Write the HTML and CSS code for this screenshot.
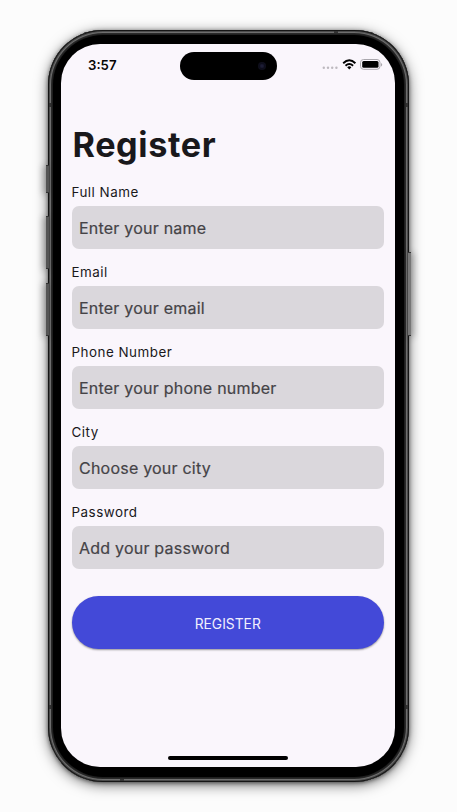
FILE: index.html
```html
<!DOCTYPE html>
<html lang="en">
<head>
<meta charset="utf-8">
<title>Register</title>
<link rel="stylesheet" href="styles.css">
</head>
<body>
<div class="phone">
  <i class="key action"></i><i class="key volume-up"></i><i class="key volume-down"></i><i class="key power"></i>
  <i class="seam top-left"></i><i class="seam top-right"></i><i class="seam side-right"></i><i class="seam bottom-left"></i><i class="seam bottom-edge"></i><i class="seam bottom-right"></i>
  <main class="screen">
    <header class="status">
      <time class="clock">3:57</time>
      <div class="island"><i class="lens"></i></div>
      <svg class="indicators" width="60" height="14" viewBox="0 0 60 14">
        <g fill="#bdb9bf"><circle cx="1.8" cy="9.8" r="1.2"/><circle cx="6" cy="9.8" r="1.2"/><circle cx="10.2" cy="9.8" r="1.2"/><circle cx="14.4" cy="9.8" r="1.2"/></g>
        <g fill="none" stroke="#000" stroke-width="1.9"><path d="M21.2 5.2Q27.3-.6 33.4 5.2"/><path d="M23.5 7.700Q27.300 4.300 31.100 7.700"/></g>
        <path d="M25.200 9.200Q27.300 7.500 29.400 9.200L27.300 11.400Z"/>
        <rect x="38.500" y="1.500" width="19.500" height="9.800" rx="3" fill="none" stroke="#aaa7ad"/>
        <rect x="40.200" y="3" width="16.300" height="6.800" rx="1.500"/>
        <path d="M59 5v3.400q1.200-.5 1.200-1.700T59 5Z" fill="#aaa7ad"/>
      </svg>
    </header>
    <form class="form">
      <h1>Register</h1>
      <label class="field"><span class="label">Full Name</span><span class="box">Enter your name</span></label>
      <label class="field"><span class="label">Email</span><span class="box">Enter your email</span></label>
      <label class="field"><span class="label">Phone Number</span><span class="box">Enter your phone number</span></label>
      <label class="field"><span class="label">City</span><span class="box">Choose your city</span></label>
      <label class="field"><span class="label">Password</span><span class="box">Add your password</span></label>
      <button type="button">REGISTER</button>
    </form>
    <div class="home"></div>
  </main>
</div>
</body>
</html>
```
FILE: styles.css
```css
* { box-sizing: border-box; }
html, body { height: 100%; overflow: hidden; }
body {
  margin: 0;
  padding: 30px 0 0 48px;
  background: #fcfcfc;
  font-family: Inter, sans-serif;
  color: #19181b;
}
.phone {
  position: relative;
  width: 361px;
  height: 752px;
  padding: 14px 14px 15px 13px;
  border-radius: 55px;
  background: #000;
  box-shadow:
    inset 0 0 0 1px #161616,
    inset 0 0 0 2px #4b4b4b,
    inset 0 0 0 3px #6e6e6e,
    inset 0 0 0 4px #292929,
    inset 0 0 0 5px #1e1e1e,
    0 1px 4px rgba(0, 0, 0, .55),
    0 3px 14px rgba(0, 0, 0, .52);
}
.key {
  position: absolute;
  left: -2px;
  width: 3px;
  background: #555;
  border: solid #333;
  border-width: 1px 0;
  box-shadow: -2px 1px 7px rgba(0, 0, 0, .45);
}
.action { top: 135px; height: 28px; }
.volume-up { top: 186px; height: 53px; }
.volume-down { top: 253px; height: 53px; }
.power {
  left: auto;
  right: -2px;
  top: 222px;
  height: 84px;
  background: #777;
  box-shadow: 2px 1px 7px rgba(0, 0, 0, .45);
}
.seam { position: absolute; background: #333; width: 2px; height: 4px; }
.top-left { left: 1px; top: 73px; }
.top-right { left: 286px; top: 1px; width: 4px; height: 2px; }
.side-right { right: 1px; top: 73px; }
.bottom-left { left: 1px; bottom: 73px; }
.bottom-edge { left: 72px; bottom: 1px; width: 4px; height: 2px; }
.bottom-right { right: 1px; bottom: 73px; }
.screen {
  display: flex;
  flex-direction: column;
  width: 334px;
  height: 723px;
  border-radius: 39px;
  background: #faf6fc;
}
.status {
  display: grid;
  grid-template-columns: 119px 97px 1fr;
  height: 79px;
  padding-top: 8px;
  align-items: start;
}
.clock {
  padding: 5px 0 0 27px;
  font-size: 13.2px;
  line-height: 16px;
  font-weight: 600;
  color: #050505;
}
.island {
  display: flex;
  align-items: center;
  justify-content: flex-end;
  height: 28px;
  padding-right: 11px;
  border-radius: 14px;
  background: #000;
}
.lens {
  width: 8px;
  height: 8px;
  border-radius: 50%;
  background: radial-gradient(#1d1d35 0 20%, #0d0d1b 45%, #11111d);
}
.indicators { margin: 6px 0 0 45px; overflow: visible; }
.form {
  display: flex;
  flex-direction: column;
  padding: 0 11px 0 10.500px;
}
h1 {
  margin: 0 0 15px 1px;
  font-size: 34.200px;
  line-height: 44px;
  font-weight: 700;
  letter-spacing: .6px;
}
.field { display: block; height: 80.100px; }
.label {
  display: block;
  height: 24px;
  font-size: 13.400px;
  line-height: 21px;
  letter-spacing: .5px;
}
.box {
  display: block;
  height: 43px;
  padding-left: 7.500px;
  border-radius: 7px;
  background: #dad7dc;
  font-size: 16px;
  line-height: 44px;
  letter-spacing: .22px;
  color: #454347;
  -webkit-text-stroke: .2px #454347;
}
button {
  height: 53.500px;
  margin: 13.500px 0 0;
  padding: 1px 0 0;
  border: 0;
  border-radius: 27px;
  background: #4349d8;
  box-shadow: 0 1px 2px rgba(0, 0, 0, .4);
  font: 400 13.800px/54px Inter, sans-serif;
  color: #f1effd;
}
.home {
  width: 120px;
  height: 4px;
  margin: auto auto 7.500px;
  border-radius: 2px;
  background: #000;
}
```
